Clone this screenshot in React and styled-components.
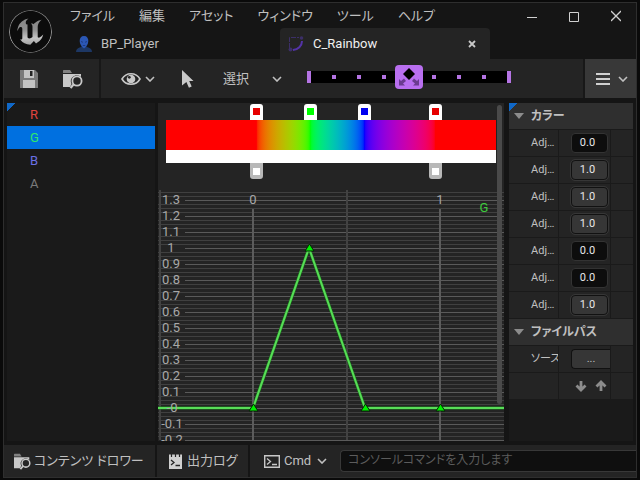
import styled, { createGlobalStyle } from 'styled-components';
import { useState } from 'react';
import { SiUnrealengine } from 'react-icons/si';

const menus = ['ファイル', '編集', 'アセット', 'ウィンドウ', 'ツール', 'ヘルプ']

const channels = [
  { name: 'R', color: '#e0443f' },
  { name: 'G', color: '#2fe86c' },
  { name: 'B', color: '#6a70e6' },
  { name: 'A', color: '#7a7a7a' },
]

const adjustments = ['0.0', '1.0', '1.0', '1.0', '0.0', '0.0', '1.0']

const colorStops = [
  { at: '27.4%', color: '#e60000' },
  { at: '43.7%', color: '#00ff00' },
  { at: '60.1%', color: '#0000f0' },
  { at: '81.6%', color: '#e60000' },
]

const alphaStops = [
  { at: '27.4%', color: '#ffffff' },
  { at: '81.6%', color: '#ffffff' },
]

function Chevron() {
  return (
    <ChevronSvg width="10" height="6" viewBox="0 0 10 6">
      <path d="M1 1l4 4 4-4" fill="none" stroke="#c0c0c0" strokeWidth="1.6" />
    </ChevronSvg>
  )
}

function Logo() {
  return (
    <LogoBox>
      <svg width="0" height="0" aria-hidden="true">
        <linearGradient id="metal" x1="0" y1="0" x2="0" y2="1">
          <stop offset="0" stopColor="#7d7d7d" />
          <stop offset="0.45" stopColor="#8f8f8f" />
          <stop offset="0.65" stopColor="#c4c4c4" />
          <stop offset="1" stopColor="#777777" />
        </linearGradient>
      </svg>
      <SiUnrealengine size={43} />
    </LogoBox>
  )
}

function PersonIcon() {
  return (
    <svg width="16" height="16" viewBox="0 0 16 16">
      <path d="M0 16c0-3 2-4 5-5l1-1h4l1 1c3 1 5 2 5 5z" fill="#1d3764" />
      <path d="M8 0c3 0 4.300 2 4.300 5S10.500 11 8 12.500C5.500 11 3.700 8 3.700 5S5 0 8 0z" fill="#2b57b5" />
      <path d="M5 5.500l2 .8M11 5.500l-2 .8M6.800 9.500h2.400" stroke="#1a3470" strokeWidth=".8" />
    </svg>
  )
}

function CurveIcon() {
  return (
    <svg width="16" height="16" viewBox="0 0 16 16">
      <path d="M1.500 12V1.500H11" fill="none" stroke="#3c2f68" strokeDasharray="5 1" />
      <path d="M14 5c0 5-4 8.500-9 9" fill="none" stroke="#5433a8" strokeWidth="2" />
      <circle cx="13.500" cy="2" r="1.800" fill="#3c2f68" />
      <circle cx="2.500" cy="13.500" r="2" fill="#3c2f68" />
    </svg>
  )
}

function SaveIcon() {
  return (
    <svg width="18" height="18" viewBox="0 0 18 18">
      <path d="M0 0h15l3 3v15H0z" fill="#7a7a7a" />
      <path d="M4 0h10v8H4z" fill="#c4c4c4" />
      <path d="M10 1h2.500v5H10z" fill="#242424" />
      <path d="M3 10h12v8H3z" fill="#c4c4c4" />
    </svg>
  )
}

function BrowseIcon({ size = 20 }) {
  return (
    <svg width={size} height={size} viewBox="0 0 20 20">
      <path d="M0 4V1.500Q0 1 .6 1H7l2 3z" fill="#808080" />
      <path d="M0 5h18v3a6 6 0 0 0-9.500 7l-1.500 3H0z" fill="#c8c8c8" />
      <circle cx="14" cy="12" r="4.600" fill="none" stroke="#c8c8c8" strokeWidth="1.800" />
      <path d="M10.700 15.300L7.500 19" stroke="#c8c8c8" strokeWidth="2.200" />
    </svg>
  )
}

function EyeIcon() {
  return (
    <svg width="20" height="14" viewBox="0 0 20 14">
      <path d="M1 7c4-7 14-7 18 0c-4 7-14 7-18 0z" fill="none" stroke="#c8c8c8" strokeWidth="1.600" />
      <circle cx="10" cy="7" r="4.300" fill="#c8c8c8" />
      <circle cx="8.300" cy="5.300" r="1.400" fill="#242424" />
    </svg>
  )
}

function PointerIcon() {
  return (
    <svg width="12" height="18" viewBox="0 0 12 18">
      <path d="M0 0l11.500 11H7.200l2.500 5.600-2.800 1.200L4.400 12 0 15.500z" fill="#c8c8c8" />
    </svg>
  )
}

function LogIcon() {
  return (
    <svg width="13" height="16" viewBox="0 0 13 16">
      <path d="M0 1.500h13V16H0z" fill="#d0d0d0" />
      <path d="M2.500 0v4M6.500 0v4M10.500 0v4" stroke="#242424" strokeWidth="1.200" />
      <path d="M2 7l3 2.500L2 12M6.500 12.500H11" fill="none" stroke="#242424" strokeWidth="1.300" />
    </svg>
  )
}

function TerminalIcon() {
  return (
    <svg width="16" height="13" viewBox="0 0 16 13">
      <path d="M.7.7h14.600v11.600H.7z" fill="none" stroke="#c8c8c8" strokeWidth="1.400" />
      <path d="M3 3.500l3.500 3L3 9.500M8 9.500h5" fill="none" stroke="#c8c8c8" strokeWidth="1.300" />
    </svg>
  )
}

// playback range with the snap handle in the middle
function SnapTrack() {
  const dots = [27, 52, 77, 127, 152, 177]
  return (
    <svg width="204" height="28" viewBox="0 0 204 28">
      <rect x="0" y="6" width="204" height="12" fill="#000" />
      <rect x="0" y="6" width="4" height="12" fill="#b574e4" />
      <rect x="200" y="6" width="4" height="12" fill="#b574e4" />
      {dots.map((x) => (
        <rect key={x} x={x - 2} y="10" width="4" height="4" fill="#b574e4" />
      ))}
      <rect x="88" y="0" width="28" height="24" rx="4" fill="#b96ff0" />
      <path d="M102 3l6 6-6 6-6-6z" fill="#000" />
      <path d="M92 20.500V14l2 2 3-2.500 2 2.500-3 2.500 2 2zM112 20.500V14l-2 2-3-2.500-2 2.500 3 2.500-2 2z" fill="#6b3b90" />
    </svg>
  )
}

function CurveGraph() {
  const bottom = 250
  const zero = 218
  const minor = []
  for (let y = 2; y < bottom; y += 4) {
    if ((y - 10) % 16 !== 0) minor.push(y)
  }
  const labels = []
  for (let i = 13; i >= -2; i--) {
    labels.push({ y: zero - i * 16, text: i === 0 ? '-0' : String(i / 10) })
  }
  const keys = [[95, 218], [151, 58], [207, 218], [282, 218]]

  return (
    <GraphSvg role="img" aria-label="G">
      {minor.map((y) => <rect key={y} x="0" y={y} width="100%" height="1" fill="#404040" />)}
      {labels.map((l) => <rect key={l.y} x="27" y={l.y} width="100%" height="1" fill="#5a5a5a" />)}
      <rect x="1" y="0" width="2" height={bottom} fill="#424242" />
      <rect x="188" y="0" width="2" height={bottom} fill="#424242" />
      <rect x="94" y="19" width="2" height={bottom} fill="#5c5c5c" />
      <rect x="281" y="19" width="2" height={bottom} fill="#5c5c5c" />
      <path d="M0 218H95L151 58L207 218H4000" fill="none" stroke="#1c7a1c" strokeWidth="3" />
      <path d="M0 218H95L151 58L207 218H4000" fill="none" stroke="#58dc58" strokeWidth="2" />
      {labels.map((l) => (
        <text key={l.text} x={l.text[0] === '-' ? 14 : 13} y={l.y + 4} textAnchor="middle">{l.text}</text>
      ))}
      <text x="95" y="14" textAnchor="middle">0</text>
      <text x="282" y="14" textAnchor="middle">1</text>
      <text x="326" y="22" textAnchor="middle" fill="#3ccc3c">G</text>
      {keys.map(([x, y]) => (
        <path key={x} d={`M${x + 0.5} ${y - 4}l4.500 7h-9z`} fill="#00f000" stroke="#062406" />
      ))}
    </GraphSvg>
  )
}

function Arrow({ up }) {
  return (
    <svg width="12" height="12" viewBox="0 0 12 12">
      <path
        d={up ? 'M6 11V2M1.500 6.500L6 2l4.500 4.500' : 'M6 1v9M1.500 5.500L6 10l4.500-4.500'}
        fill="none" stroke="#8c8c8c" strokeWidth="2.800"
      />
    </svg>
  )
}

export default function App() {
  const [channel, setChannel] = useState('G')
  const [values, setValues] = useState(adjustments)

  function changeValue(index, value) {
    setValues(values.map((v, i) => (i === index ? value : v)))
  }

  return (
    <>
      <GlobalStyle />
      <Window>
        <Header>
          <Logo />
          <HeaderRows>
            <MenuRow>
              <Menu>
                {menus.map((m) => <button key={m}>{m}</button>)}
              </Menu>
              <WindowButtons>
                <button aria-label="最小化"><svg width="10" height="12"><path d="M0 7.500h10" stroke="#d0d0d0" /></svg></button>
                <button aria-label="最大化"><svg width="10" height="12"><path d="M.5 2.500h9v9h-9z" fill="none" stroke="#d0d0d0" /></svg></button>
                <button aria-label="閉じる"><svg width="10" height="12"><path d="M0 1l10 10M10 1L0 11" stroke="#d0d0d0" strokeWidth="1.300" /></svg></button>
              </WindowButtons>
            </MenuRow>
            <Tabs>
              <Tab><PersonIcon /><span>BP_Player</span></Tab>
              <Tab $active>
                <CurveIcon />
                <span>C_Rainbow</span>
                <button aria-label="タブを閉じる"><svg width="8" height="8"><path d="M1 1l6 6M7 1L1 7" stroke="#c8c8c8" strokeWidth="1.800" /></svg></button>
              </Tab>
            </Tabs>
          </HeaderRows>
        </Header>

        <Toolbar>
          <ToolGroup>
            <button aria-label="保存"><SaveIcon /></button>
            <button aria-label="参照"><BrowseIcon /></button>
          </ToolGroup>
          <ToolMain>
            <ViewButton aria-label="表示"><EyeIcon /><Chevron /></ViewButton>
            <button aria-label="ポインタ"><PointerIcon /></button>
            <ModeBox>
              <Select aria-label="モード"><option>選択</option></Select>
              <Chevron />
            </ModeBox>
            <SnapTrack />
          </ToolMain>
          <MoreButton aria-label="メニュー">
            <svg width="14" height="12"><path d="M0 1h14M0 6h14M0 11h14" stroke="#d0d0d0" strokeWidth="2" /></svg>
            <Chevron />
          </MoreButton>
        </Toolbar>

        <Body>
          <ChannelList>
            {channels.map((c) => (
              <Channel key={c.name} $color={c.color} $selected={c.name === channel} onClick={() => setChannel(c.name)}>
                {c.name}
              </Channel>
            ))}
          </ChannelList>

          <Editor>
            <Gradient>
              <StopRow>
                {colorStops.map((s) => <Stop key={s.at} $at={s.at} $color={s.color} aria-label="カラー" />)}
              </StopRow>
              <Rainbow />
              <Alpha />
              <StopRow>
                {alphaStops.map((s) => <Stop key={s.at} $at={s.at} $color={s.color} $below aria-label="アルファ" />)}
              </StopRow>
            </Gradient>
            <CurveGraph />
            <Scrollbar />
          </Editor>

          <Details>
            <Section $corner><Triangle />カラー</Section>
            {values.map((v, i) => (
              <Property key={i}>
                <label htmlFor={`adj${i}`}>Adj…</label>
                <Cell>
                  <NumberBox id={`adj${i}`} value={v} $filled={v === '1.0'} onChange={(e) => changeValue(i, e.target.value)} />
                </Cell>
                <Cell />
              </Property>
            ))}
            <Section><Triangle />ファイルパス</Section>
            <Property>
              <span>ソース</span>
              <Cell><PathButton>...</PathButton></Cell>
              <Cell />
            </Property>
            <Property>
              <span />
              <Cell>
                <Arrows>
                  <button aria-label="下へ"><Arrow /></button>
                  <button aria-label="上へ"><Arrow up /></button>
                </Arrows>
              </Cell>
              <Cell />
            </Property>
          </Details>
        </Body>

        <StatusBar>
          <DrawerButton><BrowseIcon size={17} />コンテンツ ドロワー</DrawerButton>
          <LogButton><LogIcon />出力ログ</LogButton>
          <Console>
            <TerminalIcon />
            <CmdBox>
              <Select aria-label="コマンド種別"><option>Cmd</option></Select>
              <Chevron />
            </CmdBox>
            <ConsoleInput aria-label="コンソール" placeholder="コンソールコマンドを入力します" />
          </Console>
        </StatusBar>
      </Window>
    </>
  )
}

const GlobalStyle = createGlobalStyle`
  *{
    box-sizing: border-box;
  }

  body{
    margin: 0;
    background-color: #0a0a0a;
    color: #c0c0c0;
    font-family: Roboto, "Noto Sans CJK JP", sans-serif;
    font-size: 13px;
    line-height: 16px;
    font-feature-settings: "palt";
  }

  button, input, select{
    font: inherit;
    font-feature-settings: inherit;
    color: inherit;
    background: none;
    border: none;
    padding: 0;
    margin: 0;
  }

  button{
    white-space: nowrap;
  }

  svg{
    flex-shrink: 0;
    display: block;
  }
`

const Window = styled.div`
  height: 100vh;
  display: flex;
  flex-direction: column;
  border: 3px solid #0a0a0a;
  border-top-width: 2px;
  border-bottom-width: 2px;
  background-color: #151515;
  box-shadow: inset 0 0 0 1px #2e2e2e;
  padding: 1px;
`

const Header = styled.div`
  display: flex;
`

const LogoBox = styled.div`
  display: flex;
  align-items: center;
  justify-content: center;
  width: 53px;
  height: 56px;
  flex-shrink: 0;

  svg{
    fill: url(#metal);
    background-color: #0c0c0c;
    border-radius: 50%;
  }
`

const HeaderRows = styled.div`
  flex: 1;
`

const MenuRow = styled.div`
  display: flex;
  justify-content: space-between;
  align-items: center;
  height: 25px;
  padding: 0 15px 0 13px;
`

const Menu = styled.div`
  display: flex;
  gap: 24px;
`

const WindowButtons = styled.div`
  display: flex;
  gap: 32px;
`

const Tabs = styled.div`
  display: flex;
`

const Tab = styled.div`
  display: flex;
  align-items: center;
  width: ${(p) => (p.$active ? 210 : 223)}px;
  height: 31px;
  gap: 9px;
  padding: 0 14px 0 ${(p) => (p.$active ? 8 : 19)}px;
  border-radius: 4px 4px 0 0;
  font-size: 13px;
  color: ${(p) => (p.$active ? '#f0f0f0' : '#c0c0c0')};
  background-color: ${(p) => (p.$active ? '#242424' : 'transparent')};

  span{
    flex: 1;
  }
`

const Toolbar = styled.div`
  display: flex;
  height: 39px;
  background-color: #242424;
  flex-shrink: 0;
`

const ToolGroup = styled.div`
  display: flex;
  align-items: center;
  gap: 25px;
  width: 97px;
  padding-left: 16px;
  border-right: 2px solid #181818;
`

const ToolMain = styled.div`
  display: flex;
  align-items: center;
  flex: 1;
  padding-left: 20px;
  border-right: 2px solid #181818;
`

const ViewButton = styled.button`
  display: flex;
  align-items: center;
  gap: 4px;
  margin-right: 27px;
`

const ModeBox = styled.div`
  display: flex;
  align-items: center;
  width: 59px;
  margin: 0 25px 0 29px;
`

const Select = styled.select`
  appearance: none;
  flex: 1;
  outline: none;
`

const ChevronSvg = styled.svg`
  pointer-events: none;
`

const MoreButton = styled.button`
  display: flex;
  align-items: center;
  gap: 8px;
  padding: 0 8px 0 11px;
  background-color: #383838;
`

const Body = styled.div`
  flex: 1;
  display: grid;
  grid-template-columns: 148px 1fr 124px;
  column-gap: 3px;
  min-height: 0;
  padding: 5px 3px 4px;
`

const ChannelList = styled.div`
  display: flex;
  flex-direction: column;
  background: linear-gradient(135deg, #1068c8 6px, #1a1a1a 6px);
`

const Channel = styled.button`
  height: 23px;
  padding-left: 23px;
  text-align: left;
  color: ${(p) => p.$color};
  background-color: ${(p) => (p.$selected ? '#0070e0' : 'transparent')};
`

const Editor = styled.div`
  position: relative;
  display: flex;
  flex-direction: column;
  min-width: 0;
  min-height: 0;
  overflow: hidden;
  margin-right: 2px;
  background-color: #242424;
`

const Gradient = styled.div`
  padding: 0 8px 10px;
`

const StopRow = styled.div`
  position: relative;
  height: 17px;
`

const Stop = styled.button`
  position: absolute;
  left: ${(p) => p.$at};
  ${(p) => (p.$below ? 'top' : 'bottom')}: 0;
  width: 13px;
  height: 16px;
  margin-left: -6px;
  border: 3px solid ${(p) => (p.$below ? '#b8b8b8' : '#ffffff')};
  border-width: ${(p) => (p.$below ? '5px 3px 4px' : '4px 3px 5px')};
  border-radius: ${(p) => (p.$below ? '0 0 3px 3px' : '3px 3px 0 0')};
  background-color: ${(p) => p.$color};
`

const Rainbow = styled.div`
  height: 30px;
  background: linear-gradient(in srgb-linear to right, #f00 27.4%, #0f0 43.7%, #00f 60.1%, #f00 81.6%);
`

const Alpha = styled.div`
  height: 13px;
  background-color: #ffffff;
`

const GraphSvg = styled.svg`
  flex: 1;
  width: 100%;
  min-height: 0;

  text{
    font-size: 13px;
  }

  text:not([fill]){
    fill: #a8a8a8;
  }
`

const Scrollbar = styled.div`
  position: absolute;
  top: 2px;
  right: 2px;
  bottom: 37px;
  width: 5px;
  border-radius: 3px;
  background-color: #4a4a4a;
`

const Details = styled.div`
  background-color: #1a1a1a;
  overflow: hidden;
`

const Section = styled.div`
  display: flex;
  align-items: center;
  gap: 7px;
  height: 27px;
  padding: 0 5px;
  font-size: 12px;
  font-weight: bold;
  border-bottom: 1px solid #1a1a1a;
  background: ${(p) => (p.$corner ? 'linear-gradient(135deg, #1068c8 6px, #2f2f2f 6px)' : '#2f2f2f')};
`

const Triangle = styled.span`
  border: 5px solid transparent;
  border-top: 6px solid #8c8c8c;
  border-bottom: none;
`

const Property = styled.div`
  display: grid;
  grid-template-columns: 49px 52px 1fr;
  height: 27px;
  font-size: 11px;
  background-color: #242424;
  border-bottom: 1px solid #1a1a1a;

  > label, > span{
    padding: 5px 0 0 22px;
    overflow: hidden;
    white-space: nowrap;
  }
`

const Cell = styled.div`
  display: flex;
  align-items: center;
  min-width: 0;
  overflow: hidden;
  padding-left: 12px;
  border-left: 1px solid #1a1a1a;
`

const NumberBox = styled.input`
  width: 37px;
  height: 20px;
  padding: 0 4px 2px 0;
  text-align: center;
  color: #e8e8e8;
  border: 1px solid ${(p) => (p.$filled ? '#111111' : '#333333')};
  border-radius: 4px;
  outline: ${(p) => (p.$filled ? '1px solid #363636' : 'none')};
  background-color: ${(p) => (p.$filled ? '#363636' : '#0d0d0d')};
`

const PathButton = styled.button`
  flex: 1;
  height: 20px;
  border: 1px solid #111111;
  border-right: none;
  border-radius: 4px 0 0 4px;
  background-color: #363636;
`

const Arrows = styled.div`
  display: flex;
  gap: 8px;
  padding-left: 4px;
`

const StatusBar = styled.div`
  display: flex;
  gap: 2px;
  height: 32px;
  flex-shrink: 0;

  > *{
    background-color: #242424;
  }
`

const DrawerButton = styled.button`
  display: flex;
  align-items: center;
  gap: 3px;
  width: 151px;
  padding-left: 10px;
`

const LogButton = styled.button`
  display: flex;
  align-items: center;
  gap: 5px;
  width: 91px;
  padding-left: 12px;
`

const Console = styled.div`
  display: flex;
  align-items: center;
  flex: 1;
  min-width: 0;
  padding-left: 14px;
`

const CmdBox = styled.div`
  display: flex;
  align-items: center;
  width: 43px;
  margin: 0 13px 0 4px;
`

const ConsoleInput = styled.input`
  flex: 1;
  min-width: 0;
  height: 22px;
  padding: 0 7px 2px;
  font-size: 12px;
  border: 1px solid #383838;
  border-right: none;
  border-radius: 4px 0 0 4px;
  background-color: #0f0f0f;

  &::placeholder{
    color: #5c5c5c;
  }
`
